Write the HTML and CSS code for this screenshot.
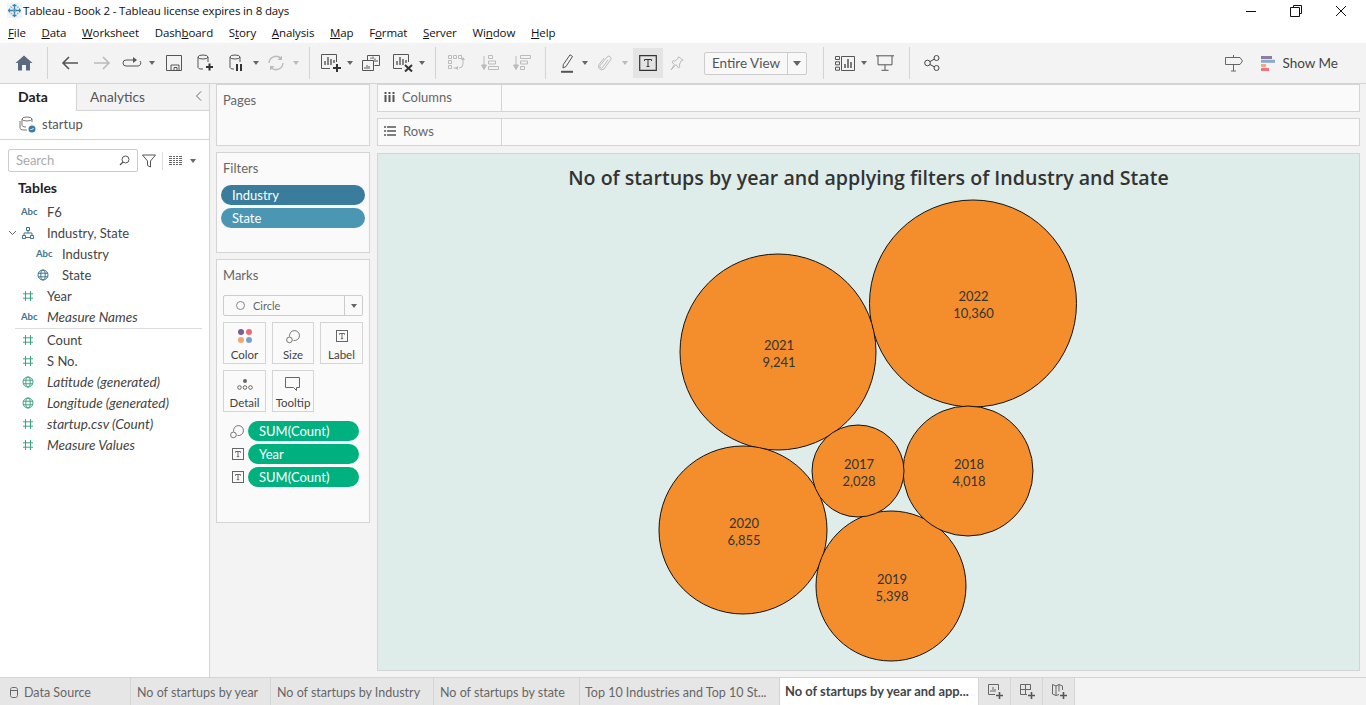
FILE: index.html
```html
<!DOCTYPE html>
<html lang="en">
<head>
    <meta charset="UTF-8">
    <meta name="viewport" content="width=device-width, initial-scale=1.0">
    <title>Tableau - Book 2</title>
    <link rel="stylesheet" href="styles.css">
</head>
<body>
    <svg class="defs" width="0" height="0">
        <symbol id="hash" viewBox="0 0 12 12"><path d="M3.5 1v10M8.5 1v10M1 3.8h10M1 8.2h10" fill="none" stroke="currentColor" stroke-width="1"/></symbol>
        <symbol id="globe" viewBox="0 0 12 12"><g fill="none" stroke="currentColor" stroke-width="1"><circle cx="6" cy="6" r="5"/><ellipse cx="6" cy="6" rx="2.2" ry="5"/><path d="M1 4.2h10M1 7.8h10"/></g></symbol>
        <symbol id="tbox" viewBox="0 0 14 14"><rect x="1.5" y="1.5" width="11" height="11" fill="none" stroke="currentColor"/><path d="M4.5 4.5h5M7 4.5v5.2M5.8 9.7h2.4M4.5 4.5v1.2M9.5 4.5v1.2" fill="none" stroke="currentColor"/></symbol>
        <symbol id="size" viewBox="0 0 18 18"><g fill="none" stroke="currentColor"><path d="M5.2 9.6A5.6 5.6 0 1 1 9.6 14"/><circle cx="5" cy="13.4" r="3.2"/></g></symbol>
    </svg>

    <header class="titlebar">
        <svg class="app-icon" width="15" height="15" viewBox="0 0 15 15"><rect width="15" height="15" fill="#eef5f9"/><g stroke="#3f82ab" stroke-width="1.300" fill="none"><path d="M7.500 1v13M1 7.500h13M5.500 2.500h4M5.500 12.500h4M2.500 5.500v4M12.500 5.500v4"/></g><path d="M3.500 3.500l8 8M11.500 3.500l-8 8" stroke="#7db2d0" stroke-width="1.200" stroke-dasharray="2 1"/></svg>
        <span class="app-title">Tableau - Book 2 - Tableau license expires in 8 days</span>
        <div class="win-buttons">
            <svg width="12" height="12" viewBox="0 0 12 12"><path d="M1 6.5h10" stroke="#111"/></svg>
            <svg width="12" height="12" viewBox="0 0 12 12"><path d="M3.5 2.5V.5h8v8h-2M.5 2.5h9v9h-9z" fill="none" stroke="#111"/></svg>
            <svg width="12" height="12" viewBox="0 0 12 12"><path d="M1 1l10 10M11 1L1 11" stroke="#111"/></svg>
        </div>
    </header>

    <nav class="menubar">
        <span><u>F</u>ile</span><span><u>D</u>ata</span><span><u>W</u>orksheet</span><span>Dash<u>b</u>oard</span><span>S<u>t</u>ory</span><span><u>A</u>nalysis</span><span><u>M</u>ap</span><span>F<u>o</u>rmat</span><span><u>S</u>erver</span><span>Wi<u>n</u>dow</span><span><u>H</u>elp</span>
    </nav>

    <div class="toolbar">
        <div class="tool first"><svg width="18" height="16" viewBox="0 0 18 16"><path d="M9 .5L.5 8H3v7.5h4V10h4v5.5h4V8h2.5z" fill="#5b6b7b"/></svg></div>
        <i class="sep"></i>
        <div class="tool"><svg width="18" height="14" viewBox="0 0 18 14"><path d="M17 7H2M8 1L2 7l6 6" fill="none" stroke="#555" stroke-width="1.6"/></svg></div>
        <div class="tool"><svg width="18" height="14" viewBox="0 0 18 14"><path d="M1 7h15M10 1l6 6-6 6" fill="none" stroke="#bbb" stroke-width="1.6"/></svg></div>
        <div class="tool w28"><svg width="20" height="12" viewBox="0 0 20 12"><path d="M13 3H4a3 3 0 0 0 0 6h12a3 3 0 0 0 2-5" fill="none" stroke="#555"/><path d="M11 0l4 3-4 3z" fill="#555"/></svg></div>
        <b class="caret w12"></b>
        <div class="tool"><svg width="16" height="16" viewBox="0 0 16 16"><path d="M.5.5h15v15H.5zM5 15.5V10h8v5.5M8 12.5h3v3H8z" fill="none" stroke="#555"/></svg></div>
        <div class="tool w30"><svg width="16" height="18" viewBox="0 0 16 18"><g fill="none" stroke="#555"><ellipse cx="6" cy="3" rx="5" ry="2"/><path d="M1 3v10c0 1 1 2 3 2h2M11 3v5"/></g><path d="M9 13h7M12.5 9.500v7" stroke="#333" stroke-width="2"/></svg></div>
        <div class="tool"><svg width="14" height="18" viewBox="0 0 14 18"><g fill="none" stroke="#555"><ellipse cx="6" cy="3" rx="5" ry="2"/><path d="M1 3v10c0 1 1 2 3 2h1M11 3v5"/></g><path d="M8 10v7M12 10v7" stroke="#333" stroke-width="2"/></svg></div>
        <b class="caret w8"></b>
        <div class="tool"><svg width="18" height="16" viewBox="0 0 18 16"><path d="M2 8a7 7 0 0 1 12-4.500M16 8A7 7 0 0 1 4 12.500" fill="none" stroke="#bbb" stroke-width="1.400"/><path d="M15 .500v4.500h-4.500zM3 15.500V11h4.500z" fill="#bbb"/></svg></div>
        <b class="caret w8 off"></b>
        <i class="sep"></i>
        <div class="tool w30"><svg width="20" height="18" viewBox="0 0 20 18"><g fill="none" stroke="#555"><path d="M9 14.500H.5V.5h15V8"/></g><path d="M4 11V7M7 11V3M10 11V5M13 9V6" stroke="#555" stroke-width="1.400"/><path d="M12 14h8M16 10v8" stroke="#333" stroke-width="2"/></svg></div>
        <b class="caret w8"></b>
        <div class="tool w34"><svg width="18" height="16" viewBox="0 0 18 16"><path d="M5.500 5V.5h12v10h-5M.5 5.500h11v10H.5z" fill="#f3f3f3" stroke="#555"/><path d="M9 4V2.500M11 4V1.500M13 7V3.500M15 7V5M3 14v-2M5 14v-4M7 14v-3" stroke="#555"/></svg></div>
        <div class="tool w30"><svg width="20" height="18" viewBox="0 0 20 18"><path d="M9 14.500H.5V.5h15V8" fill="none" stroke="#555"/><path d="M4 11V7M7 11V3M10 11V5M13 9V6" stroke="#555" stroke-width="1.400"/><path d="M12 11l7 6.500M19 11l-7 6.500" stroke="#333" stroke-width="2"/></svg></div>
        <b class="caret w8"></b>
        <i class="sep"></i>
        <div class="tool w30"><svg width="18" height="16" viewBox="0 0 18 16"><g fill="none" stroke="#bbb"><path d="M.5.5h3v3h-3zM5.500.5h3v3h-3zM10.500.5h3v3h-3zM.5 5.500h3v3h-3zM.5 10.500h3v3h-3zM5.500 13h4M15 5v4a4 4 0 0 1-4 4"/></g><path d="M13 5l2-3 2 3zM10 11l-3 2 3 2z" fill="#bbb"/></svg></div>
        <div class="tool w36"><svg width="18" height="16" viewBox="0 0 18 16"><path d="M3 1v12M.5 10L3 14.500 5.500 10z" fill="#bbb" stroke="#bbb"/><path d="M7.500.5h4v3h-4zM7.500 6h7v3h-7zM7.500 11.500h10v3h-10z" fill="none" stroke="#bbb"/></svg></div>
        <div class="tool w28"><svg width="18" height="16" viewBox="0 0 18 16"><path d="M3 1v12M.5 10L3 14.500 5.500 10z" fill="#bbb" stroke="#bbb"/><path d="M7.500.5h10v3h-10zM7.500 6h7v3h-7zM7.500 11.500h4v3h-4z" fill="none" stroke="#bbb"/></svg></div>
        <i class="sep far"></i>
        <div class="tool w29"><svg width="14" height="19" viewBox="0 0 14 19"><path d="M10 .8l2.500 1.700-6.500 10-3 1.500.3-3.400z" fill="none" stroke="#555"/><path d="M1 17.800h12" stroke="#555" stroke-width="2"/></svg></div>
        <b class="caret w8"></b>
        <div class="tool"><svg width="14" height="16" viewBox="0 0 14 16"><path d="M10 5L4.500 12.500a1.500 1.500 0 0 1-2.500-1.800L9 2a2.300 2.300 0 0 1 3.500 3L6 14a3.400 3.400 0 0 1-5-4.500L6 3" fill="none" stroke="#bbb"/></svg></div>
        <b class="caret w8 off"></b>
        <div class="tool w30 active"><svg width="18" height="16" viewBox="0 0 18 16"><path d="M.7.7h16.600v14.600H.7z" fill="none" stroke="#333" stroke-width="1.200"/><path d="M5.500 4.500h7M9 4.500v7M7.500 11.500h3M5.500 4.500v1.500M12.500 4.500v1.500" fill="none" stroke="#333"/></svg></div>
        <div class="tool w28"><svg width="14" height="15" viewBox="0 0 14 15"><path d="M8.500.8l4.700 3.400-2.300.8-1.600 4.100.6 2-1.400.8-2.500-3.300L1 14l3.300-5.400L2 6l1-1.300 2 .4L8 2.500z" fill="none" stroke="#bbb"/></svg></div>
        <div class="fit-combo"><span class="fit-label">Entire View</span><span class="fit-arrow"><b class="caret dark"></b></span></div>
        <i class="sep wide"></i>
        <div class="tool w30 cards"><svg width="20" height="15" viewBox="0 0 20 15"><g fill="none" stroke="#555"><path d="M.5.500h4v3h-4zM.5 5.800h4v3h-4zM.5 11.200h4v3h-4zM6.500.500h13v14h-13z"/></g><path d="M10 12V8M13 12V3M16 12V6" stroke="#555" stroke-width="1.500"/></svg></div>
        <b class="caret w8"></b>
        <div class="tool w34"><svg width="18" height="16" viewBox="0 0 18 16"><path d="M0 .8h18M2 .8v9h14v-9M9 10v5M5.500 15.300h7" fill="none" stroke="#555" stroke-width="1"/></svg></div>
        <i class="sep"></i>
        <div class="tool"><svg width="16" height="16" viewBox="0 0 16 16"><g fill="none" stroke="#444"><circle cx="3.500" cy="8" r="2.800"/><circle cx="12.500" cy="3" r="2.500"/><circle cx="12.500" cy="13" r="2.500"/><path d="M6 6.500l4.300-2.300M6 9.500l4.300 2.300"/></g></svg></div>
        <div class="toolbar-right">
            <svg width="18" height="18" viewBox="0 0 18 18"><path d="M.5 3.500h14.500l2.500 3.500-2.500 3.500H.5zM8.500 1v2.500M8.500 10.500V17M6 17h5" fill="none" stroke="#666"/></svg>
            <span class="showme">
                <svg width="15" height="15" viewBox="0 0 15 15"><path d="M0 0h11v3H0z" fill="#8d7aa5"/><path d="M0 3.800h14v3H0z" fill="#86a9cf"/><path d="M0 8h5v3H0z" fill="#f2a87c"/><path d="M0 12h8v3H0z" fill="#f2737f"/></svg>
                Show Me
            </span>
        </div>
    </div>

    <main class="workspace">
        <aside class="data-pane">
            <div class="pane-tabs">
                <div class="pane-tab current">Data</div>
                <div class="pane-tab">Analytics<svg class="collapse" width="8" height="10" viewBox="0 0 8 10"><path d="M6 .5L1.500 5 6 9.500" fill="none" stroke="#666"/></svg></div>
            </div>
            <div class="source-row">
                <svg width="17" height="17" viewBox="0 0 17 17"><g fill="none" stroke="#777"><ellipse cx="8" cy="3" rx="5" ry="2"/><path d="M3 3v6c0 1 1 2 4 2M13 3v3M1 5v7c0 1 1 2 4 2h3"/></g><circle cx="13" cy="13" r="3.500" fill="#3b7ea1"/><path d="M11.500 13l1 1 2-2" fill="none" stroke="#fff"/></svg>
                <span>startup</span>
            </div>
            <div class="search-row">
                <div class="search-box"><span>Search</span><svg width="11" height="11" viewBox="0 0 11 11"><circle cx="6.500" cy="4.500" r="3.500" fill="none" stroke="#555"/><path d="M4 7l-3 3" stroke="#555" stroke-width="1.300"/></svg></div>
                <svg class="funnel" width="14" height="14" viewBox="0 0 14 14"><path d="M.5 1h13L8.500 7v6l-3-1.500V7z" fill="none" stroke="#555"/></svg>
                <i class="mini-sep"></i>
                <svg class="listview" width="13" height="9" viewBox="0 0 13 9"><path d="M0 .5h13M0 2.500h13M0 4.500h13M0 6.500h13M0 8.500h13" stroke="#666"/><path d="M3.500 0v9M6.500 0v9M9.500 0v9" stroke="#fff"/></svg>
                <b class="caret dark"></b>
            </div>
            <h3 class="tables-head">Tables</h3>
            <ul class="fields">
                <li><span class="abc">Abc</span>F6</li>
                <li class="group">
                    <svg class="chev" width="9" height="6" viewBox="0 0 9 6"><path d="M1 1l3.500 3.500L8 1" fill="none" stroke="#666"/></svg>
                    <svg class="ficon blue" width="12" height="12" viewBox="0 0 12 12"><path d="M4.500.5h3v3h-3zM.5 8.500h3v3h-3zM8.500 8.500h3v3h-3zM6 3.500V6M2 8.500V6h8v2.500M4 10.500h4" fill="none" stroke="currentColor"/></svg>
                    Industry, State
                </li>
                <li class="nested"><span class="abc">Abc</span>Industry</li>
                <li class="nested"><svg class="ficon blue"><use href="#globe"/></svg>State</li>
                <li><svg class="ficon green"><use href="#hash"/></svg>Year</li>
                <li class="calc"><span class="abc">Abc</span>Measure Names</li>
                <li class="divider"></li>
                <li><svg class="ficon green"><use href="#hash"/></svg>Count</li>
                <li><svg class="ficon green"><use href="#hash"/></svg>S No.</li>
                <li class="calc"><svg class="ficon green"><use href="#globe"/></svg>Latitude (generated)</li>
                <li class="calc"><svg class="ficon green"><use href="#globe"/></svg>Longitude (generated)</li>
                <li class="calc"><svg class="ficon green"><use href="#hash"/></svg>startup.csv (Count)</li>
                <li class="calc"><svg class="ficon green"><use href="#hash"/></svg>Measure Values</li>
            </ul>
        </aside>

        <section class="cards-col">
            <div class="card pages"><div class="card-title">Pages</div></div>
            <div class="card filters">
                <div class="card-title">Filters</div>
                <div class="filter-pill dark-blue">Industry</div>
                <div class="filter-pill light-blue">State</div>
            </div>
            <div class="card marks">
                <div class="card-title">Marks</div>
                <div class="mark-combo">
                    <span class="mark-type"><i class="ring"></i>Circle</span>
                    <span class="mark-arrow"><b class="caret dark"></b></span>
                </div>
                <div class="mark-grid">
                    <div class="mark-btn">
                        <svg width="16" height="16" viewBox="0 0 16 16"><circle cx="4" cy="4" r="3" fill="#7b5c94"/><circle cx="12" cy="4" r="3" fill="#ee6a72"/><circle cx="4" cy="12" r="3" fill="#f2a66f"/><circle cx="12" cy="12" r="3" fill="#7d9fcd"/></svg>
                        <span>Color</span>
                    </div>
                    <div class="mark-btn"><svg class="gr" width="16" height="16"><use href="#size"/></svg><span>Size</span></div>
                    <div class="mark-btn"><svg class="gr" width="14" height="14"><use href="#tbox"/></svg><span>Label</span></div>
                    <div class="mark-btn">
                        <svg width="16" height="16" viewBox="0 0 16 16"><circle cx="8" cy="5" r="2" fill="#666"/><g fill="none" stroke="#666"><circle cx="2.500" cy="11.500" r="1.800"/><circle cx="8" cy="11.500" r="1.800"/><circle cx="13.500" cy="11.500" r="1.800"/></g></svg>
                        <span>Detail</span>
                    </div>
                    <div class="mark-btn"><svg width="16" height="16" viewBox="0 0 16 16"><path d="M.5 1.500h14v10h-3v3l-3-3H.5z" fill="none" stroke="#666"/></svg><span>Tooltip</span></div>
                </div>
                <div class="mark-pills">
                    <div class="pill-row"><svg class="gr" width="16" height="16"><use href="#size"/></svg><div class="green-pill">SUM(Count)</div></div>
                    <div class="pill-row"><svg class="gr" width="14" height="14"><use href="#tbox"/></svg><div class="green-pill">Year</div></div>
                    <div class="pill-row"><svg class="gr" width="14" height="14"><use href="#tbox"/></svg><div class="green-pill">SUM(Count)</div></div>
                </div>
            </div>
        </section>

        <section class="view-col">
            <div class="shelf">
                <div class="shelf-label"><svg width="11" height="10" viewBox="0 0 11 10"><path d="M1.500 0v2M1.500 3v7M5.500 0v2M5.500 3v7M9.500 0v2M9.500 3v7" stroke="#555" stroke-width="2"/></svg>Columns</div>
            </div>
            <div class="shelf">
                <div class="shelf-label"><svg width="12" height="10" viewBox="0 0 12 10"><path d="M0 1h2M3 1h9M0 5h2M3 5h9M0 9h2M3 9h9" stroke="#555" stroke-width="1.500"/></svg>Rows</div>
            </div>
            <div class="viz">
                <h1 class="viz-title">No of startups by year and applying filters of Industry and State</h1>
                <svg class="bubbles" width="981" height="515" viewBox="378 154 981 515">
                    <g class="bubble"><circle cx="973" cy="303.500" r="103.500"/><text x="973.500" y="301">2022</text><text x="973.500" y="318">10,360</text></g>
                    <g class="bubble"><circle cx="778" cy="352" r="98"/><text x="779" y="350">2021</text><text x="779" y="367">9,241</text></g>
                    <g class="bubble"><circle cx="743" cy="530" r="84"/><text x="744" y="528">2020</text><text x="744" y="545">6,855</text></g>
                    <g class="bubble"><circle cx="891" cy="586" r="75"/><text x="892" y="584">2019</text><text x="892" y="601">5,398</text></g>
                    <g class="bubble"><circle cx="968" cy="471" r="65"/><text x="969" y="469">2018</text><text x="969" y="486">4,018</text></g>
                    <g class="bubble"><circle cx="858" cy="471" r="46"/><text x="859" y="469">2017</text><text x="859" y="486">2,028</text></g>
                </svg>
            </div>
        </section>
    </main>

    <footer class="tabbar">
        <div class="tab source"><svg width="8" height="11" viewBox="0 0 8 11"><path d="M.5 2.500v6c0 1 1 2 2 2h3c1 0 2-1 2-2v-6c0-1-1-2-2-2h-3c-1 0-2 1-2 2zM.5 3.500h7" fill="none" stroke="#666"/></svg>Data Source</div>
        <div class="tab t1">No of startups by year</div>
        <div class="tab t2">No of startups by Industry</div>
        <div class="tab t3">No of startups by state</div>
        <div class="tab t4">Top 10 Industries and Top 10 St...</div>
        <div class="tab t5 on">No of startups by year and app...</div>
        <div class="tab add"><svg width="16" height="15" viewBox="0 0 16 15"><path d="M7 10.500H.5V.5h10V6" fill="none" stroke="#666"/><path d="M3 8V6M5 8V3M7 8V5" stroke="#666"/><path d="M8 11.500h7M11.500 8v7" stroke="#555" stroke-width="1.600"/></svg></div>
        <div class="tab add"><svg width="16" height="15" viewBox="0 0 16 15"><path d="M7 10.500H.5V.5h10V6M.5 5.500h10M5.500.5v10" fill="none" stroke="#666"/><path d="M8 11.500h7M11.500 8v7" stroke="#555" stroke-width="1.600"/></svg></div>
        <div class="tab add"><svg width="16" height="15" viewBox="0 0 16 15"><path d="M7 10.500l-3 1-3.500-1.500V.5L4 2l3-1.500L10.500 2v4M4 2v9.500M7 .5v7" fill="none" stroke="#666"/><path d="M8 11.500h7M11.500 8v7" stroke="#555" stroke-width="1.600"/></svg></div>
    </footer>
</body>
</html>
```

FILE: styles.css
```css
* {
    box-sizing: border-box;
}
html, body {
    margin: 0;
    height: 705px;
    overflow: hidden;
}
body {
    display: flex;
    flex-direction: column;
    font-family: Lato, "Open Sans", sans-serif;
    font-size: 13px;
    color: #444;
    background: #f3f3f3;
}
.defs {
    position: absolute;
}
svg {
    display: block;
    flex: none;
}

/* window chrome */
.titlebar {
    height: 21px;
    display: flex;
    align-items: center;
    padding-left: 7px;
    background: #fff;
    font-family: "Open Sans", sans-serif;
    font-size: 11.500px;
    letter-spacing: -0.14px;
    color: #111;
}
.app-icon {
    margin-right: 1px;
}
.win-buttons {
    margin-left: auto;
    display: flex;
    gap: 33px;
    padding-right: 19px;
}
.menubar {
    height: 22px;
    display: flex;
    align-items: center;
    gap: 15.700px;
    padding-left: 8px;
    background: #fff;
    font-family: "Open Sans", sans-serif;
    font-size: 11.500px;
    letter-spacing: -0.1px;
    color: #111;
}

/* toolbar */
.toolbar {
    height: 41px;
    display: flex;
    align-items: center;
    padding-left: 8px;
    background: #f3f3f3;
    border-bottom: 1px solid #d4d4d4;
}
.tool {
    width: 32px;
    height: 30px;
    display: flex;
    align-items: center;
    justify-content: center;
    flex: none;
}
.w28 { width: 28px; }
.w29 { width: 29px; }
.w30 { width: 30px; }
.w34 { width: 34px; }
.w36 { width: 36px; }
.w8 { width: 8px; }
.w12 { width: 12px; }
.sep {
    width: 1px;
    height: 32px;
    margin: 0 6px 0 7px;
    background: #d4d4d4;
    flex: none;
}
.caret + .sep, .sep.far {
    margin-left: 9px;
}
.tool.active {
    background: #e4e4e4;
    margin-left: 4px;
}
.caret {
    display: flex;
    flex: none;
    justify-content: center;
    height: 4px;
    position: relative;
}
.caret::before {
    content: "";
    border-left: 3px solid transparent;
    border-right: 3px solid transparent;
    border-top: 4px solid #666;
}
.caret.off::before {
    border-top-color: #bbb;
}
.caret.dark::before {
    border-left-width: 4px;
    border-right-width: 4px;
    border-top: 5px solid #666;
}
.fit-combo {
    width: 103px;
    height: 23px;
    margin-left: 13px;
    display: flex;
    align-items: center;
    border: 1px solid #ccc;
    border-radius: 2px;
    background: #f8f8f8;
    flex: none;
}
.fit-label {
    flex: 1;
    padding-left: 7px;
    font-size: 13.500px;
    color: #555;
    line-height: 21px;
    border-right: 1px solid #ccc;
}
.fit-arrow {
    width: 18px;
    display: flex;
    justify-content: center;
}
.sep.wide {
    margin-left: 16px;
}
.toolbar-right {
    margin-left: auto;
    display: flex;
    align-items: center;
    gap: 18px;
    padding-right: 28px;
}
.showme {
    display: flex;
    align-items: center;
    gap: 6px;
    font-size: 13.500px;
    color: #444;
}

.workspace {
    flex: 1;
    display: flex;
    min-height: 0;
}

/* data pane */
.data-pane {
    width: 210px;
    background: #fff;
    border-right: 1px solid #d4d4d4;
    flex: none;
}
.pane-tabs {
    height: 27px;
    display: flex;
}
.pane-tab {
    font-size: 13.700px;
    line-height: 25px;
    flex: 1;
    padding-left: 13px;
    position: relative;
    background: #f3f3f3;
    border-bottom: 1px solid #d4d4d4;
    color: #555;
}
.pane-tab.current {
    flex: none;
    width: 77px;
    padding-left: 18px;
    font-size: 14px;
    background: #fff;
    border-bottom: none;
    border-right: 1px solid #d4d4d4;
    font-weight: 700;
    color: #222;
}
.collapse {
    position: absolute;
    right: 6px;
    top: 7px;
}
.source-row {
    height: 29px;
    display: flex;
    align-items: center;
    gap: 6px;
    padding: 0 0 2px 19px;
    border-bottom: 1px solid #d4d4d4;
    color: #555;
}
.search-row {
    display: flex;
    align-items: center;
    height: 23px;
    margin-top: 9px;
    padding-left: 8px;
}
.search-box {
    width: 130px;
    height: 23px;
    display: flex;
    align-items: center;
    justify-content: space-between;
    padding: 0 7px 1px;
    border: 1px solid #ccc;
    border-radius: 2px;
    color: #aaa;
}
.funnel {
    margin-left: 4px;
}
.mini-sep {
    width: 1px;
    height: 18px;
    margin: 0 6px;
    background: #ddd;
}
.listview {
    margin-right: 8px;
}
.search-row .caret.dark::before {
    border-left-width: 3px;
    border-right-width: 3px;
    border-top-width: 4px;
}
.tables-head {
    margin: 5px 0 0 18px;
    height: 21px;
    font-size: 14px;
    line-height: 21px;
    color: #222;
}
.fields {
    list-style: none;
    margin: 3px 0 0;
    padding: 0;
}
.fields li {
    height: 21px;
    display: flex;
    align-items: center;
    padding-left: 20px;
    color: #444;
}
.abc {
    width: 26px;
    margin-left: 1px;
    flex: none;
    font-size: 9.500px;
    font-weight: 700;
    color: #3f7391;
}
.ficon {
    width: 12px;
    height: 12px;
    margin: 0 13px 0 2px;
}
.fields .nested {
    padding-left: 35px;
}
.fields .group {
    padding-left: 8px;
}
.chev {
    margin-right: 3px;
}
.fields .calc {
    font-style: italic;
    font-size: 13.600px;
}
.fields .calc .abc {
    font-style: normal;
}
.blue {
    color: #3f7391;
}
.green {
    color: #3da47f;
}
.fields .divider {
    height: 1px;
    margin: 1px 7px 0 15px;
    padding: 0;
    background: #ddd;
}

/* pages, filters, marks */
.cards-col {
    width: 167px;
    flex: none;
    display: flex;
    flex-direction: column;
    gap: 6px;
    padding-left: 6px;
    padding-right: 7px;
}
.card {
    background: #fafafa;
    border: 1px solid #d4d4d4;
    padding: 8px 6px 0;
}
.card-title {
    font-size: 13px;
    line-height: 14px;
    color: #666;
}
.pages {
    height: 62px;
}
.filters {
    height: 101px;
    padding: 8px 4px 0;
}
.filters .card-title {
    margin-left: 2px;
    margin-bottom: 10px;
}
.filter-pill {
    height: 20px;
    line-height: 20px;
    border-radius: 10px;
    padding-left: 11px;
    margin-bottom: 3px;
    color: #fff;
}
.dark-blue {
    background: #3a7c9b;
}
.light-blue {
    background: #4a96b3;
}
.marks {
    height: 264px;
}
.mark-combo {
    width: 140px;
    height: 21px;
    margin-top: 13px;
    display: flex;
    align-items: center;
    border: 1px solid #ccc;
    border-radius: 2px;
    font-size: 11px;
    color: #666;
}
.mark-type {
    flex: 1;
    display: flex;
    align-items: center;
    padding-left: 12px;
    line-height: 19px;
    border-right: 1px solid #ccc;
}
.ring {
    width: 9px;
    height: 9px;
    border: 1px solid #888;
    border-radius: 50%;
    margin-right: 8px;
}
.mark-arrow {
    width: 17px;
    display: flex;
    justify-content: center;
}
.mark-arrow .caret.dark::before {
    border-left-width: 3.500px;
    border-right-width: 3.500px;
    border-top-width: 4px;
}
.mark-grid {
    display: grid;
    grid-template-columns: 43px 42px 43px;
    grid-auto-rows: 42px;
    column-gap: 6px;
    row-gap: 6px;
    margin-top: 6px;
}
.mark-btn {
    border: 1px solid #d4d4d4;
    display: flex;
    flex-direction: column;
    align-items: center;
    padding-top: 5px;
    gap: 4px;
    font-size: 11.500px;
    color: #444;
    line-height: 13px;
}
.mark-btn svg {
    height: 16px;
}
.gr {
    color: #666;
}
.mark-pills {
    margin-top: 9px;
    display: flex;
    flex-direction: column;
    gap: 3px;
}
.pill-row {
    display: flex;
    align-items: center;
    justify-content: flex-end;
    padding-right: 4px;
    gap: 3px;
    position: relative;
}
.green-pill {
    width: 111px;
    height: 20px;
    line-height: 20px;
    padding-left: 11px;
    border-radius: 10px;
    background: #00b180;
    color: #fff;
}

/* shelves and view */
.view-col {
    flex: 1;
    display: flex;
    flex-direction: column;
    gap: 6px;
    padding-right: 6px;
    min-width: 0;
}
.shelf {
    height: 28px;
    flex: none;
    background: #fafafa;
    border: 1px solid #d4d4d4;
}
.shelf-label {
    width: 124px;
    height: 26px;
    display: flex;
    align-items: center;
    gap: 7px;
    padding: 0 0 2px 6px;
    border-right: 1px solid #d4d4d4;
    font-size: 13px;
    color: #666;
}
.viz {
    height: 518px;
    margin-top: 1px;
    background: #dfedea;
    border: 1px solid #d4d4d4;
    position: relative;
}
.viz-title {
    margin: 12px 0 0;
    text-align: center;
    font-family: "Open Sans", sans-serif;
    font-size: 19.600px;
    line-height: 24px;
    font-weight: 600;
    color: #333;
}
.bubbles {
    position: absolute;
    left: 0;
    top: 0;
}
.bubble circle {
    fill: #f48e2c;
    stroke: #111;
    stroke-width: 1;
}
.bubble text {
    font-family: Lato, sans-serif;
    font-size: 13px;
    fill: #333;
    text-anchor: middle;
}

/* sheet tabs */
.tabbar {
    height: 28px;
    flex: none;
    display: flex;
    background: #f3f3f3;
    border-top: 1px solid #d4d4d4;
}
.tab {
    height: 27px;
    line-height: 29px;
    padding-left: 6px;
    background: #e6e6e6;
    border-right: 1px solid #d4d4d4;
    font-size: 12.500px;
    color: #666;
    white-space: nowrap;
    flex: none;
}
.tab.source {
    width: 131px;
    display: flex;
    align-items: center;
    gap: 6px;
    padding: 1px 0 0 10px;
}
.t1 { width: 140px; }
.t2 { width: 163px; }
.t3 { width: 146px; }
.t4 { width: 200px; padding-left: 5px; }
.t5 { width: 199px; padding-left: 5px; }
.tab.on {
    background: #fff;
    font-size: 12.900px;
    font-weight: 700;
    color: #444;
    line-height: 27px;
}
.tab.add {
    width: 32px;
    display: flex;
    align-items: center;
    justify-content: center;
    padding: 0 0 0 2px;
}
```
